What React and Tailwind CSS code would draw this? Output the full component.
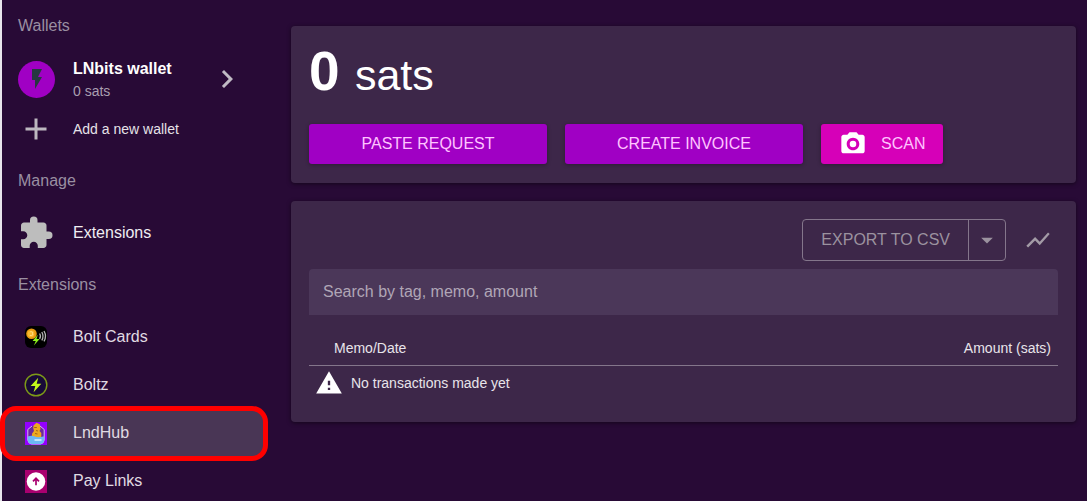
import {
  MdAdd,
  MdArrowDropDown,
  MdChevronRight,
  MdExtension,
  MdFlashOn,
  MdShowChart,
  MdWarning,
} from "react-icons/md";

function CameraIcon() {
  return (
    <svg viewBox="0 0 24 24" className="size-7 text-white" fill="currentColor" aria-hidden="true">
      <circle cx="12" cy="12" r="2.8" />
      <path d="M9 2L7.17 4H4c-1.1 0-2 .9-2 2v12c0 1.1.9 2 2 2h16c1.1 0 2-.9 2-2V6c0-1.1-.9-2-2-2h-3.17L15 2H9zm3 15.4c-2.98 0-5.4-2.42-5.4-5.4s2.42-5.4 5.4-5.4 5.4 2.42 5.4 5.4-2.42 5.4-5.4 5.4z" />
    </svg>
  );
}

function BoltCardsIcon() {
  return (
    <svg viewBox="0 0 24 24" className="size-6" aria-hidden="true">
      <rect x="1" y="1" width="22" height="22" rx="6" fill="#000" />
      <circle cx="7.5" cy="8.8" r="5.3" fill="#e99a12" />
      <circle cx="7" cy="8.8" r="3.4" fill="#f7b92e" />
      <path d="M6.2 6.8h1.6q1.3.2.7 1.6q1.2 1.8-.8 2H5.9" fill="none" stroke="#ffe29a" strokeWidth=".9" />
      <path d="M13.8 9.8L8.6 16h3.2l-1.9 4.6L15.6 14h-3.1z" fill="#8df21c" />
      <path d="M15.600 8.500q1.700 2.700 0 5.400M17.800 7q2.400 4.200 0 8.400M20 6q3 5.200 0 10.400" fill="none" stroke="#b5b5b5" strokeWidth="1.3" />
    </svg>
  );
}

function BoltzIcon() {
  return (
    <svg viewBox="0 0 24 24" className="size-6" aria-hidden="true">
      <circle cx="12" cy="12" r="10.8" fill="#180a38" stroke="#7d9a18" strokeWidth="1.4" />
      <path d="M14.2 4.8L6.6 13.1h4.7L9.6 19.2L17.3 10.8h-4.6z" fill="#c4f81a" />
    </svg>
  );
}

function LndHubIcon() {
  return (
    <svg viewBox="0 0 24 24" className="size-6" aria-hidden="true">
      <rect x="1" y="1" width="22" height="23" fill="#9400ff" />
      <path d="M8 5L3.8 8.5V19q.4 3.5 3.6 4h9.2q3.2-.5 3.6-4V8.500L16 5" fill="#6b2a9c" stroke="#d9b8f5" strokeWidth="1" />
      <path d="M9.500 4.500L12.500 1.800L15.800 3.200L16.500 8L15.500 10l1.800 2V17H7.800l.3-4.500L10 10L9.200 7z" fill="#eda91f" />
      <path d="M10.200 6.500h2.600M12 9.500l2 .5M11 12.500l2.500.5" stroke="#9b5d17" strokeWidth=".9" />
      <path d="M3.800 15.500q4-1.500 7 0t9.400-.2V19q-.4 3.500-3.600 4H7.400q-3.200-.5-3.600-4z" fill="#6bb8f5" />
      <path d="M10.500 19h7" stroke="#d6efff" strokeWidth="1.6" />
    </svg>
  );
}

function PayLinksIcon() {
  return (
    <svg viewBox="0 0 24 24" className="size-6" aria-hidden="true">
      <rect x="1" y="1" width="22" height="23" fill="#a9006f" />
      <circle cx="12" cy="12.5" r="9.3" fill="#fff" />
      <path d="M12 16.2V9.8M9 12.3L12 9.3l3 3" fill="none" stroke="#a9006f" strokeWidth="1.7" />
    </svg>
  );
}

const extensions = [
  { name: "Bolt Cards", Icon: BoltCardsIcon },
  { name: "Boltz", Icon: BoltzIcon },
  { name: "LndHub", Icon: LndHubIcon, active: true },
  { name: "Pay Links", Icon: PayLinksIcon },
];

function NavLabel({ children }) {
  return <h2 className="flex h-12 items-center px-4 text-base text-[#9a8fa2]">{children}</h2>;
}

function Sidebar() {
  return (
    <nav className="w-[265px] shrink-0 border-l-2 border-[#e9e5ec] pt-0.5">
      <NavLabel>Wallets</NavLabel>
      <a href="#wallet" className="flex h-[58px] items-center px-4">
        <span className="flex w-[55px] shrink-0">
          <span className="flex size-[37px] items-center justify-center rounded-full bg-[#a000c4]">
            <MdFlashOn className="size-6 text-[#263840]" />
          </span>
        </span>
        <span className="flex-1 leading-5">
          <span className="block text-base font-bold text-white">LNbits wallet</span>
          <span className="block text-sm text-[#a99fb0]">0 sats</span>
        </span>
        <MdChevronRight className="mr-1 size-9 text-[#c0bac4]" />
      </a>
      <a href="#add" className="flex h-[42px] items-center px-4 text-sm text-[#e6e2e8]">
        <span className="flex w-[55px] shrink-0">
          <MdAdd className="size-9 text-[#bdb8c0]" />
        </span>
        Add a new wallet
      </a>
      <div className="pt-[7px]">
        <NavLabel>Manage</NavLabel>
      </div>
      <a href="#extensions" className="flex h-14 items-center px-4 text-base text-[#f0edf2]">
        <span className="w-[55px] shrink-0">
          <MdExtension className="size-9 text-[#bdbdbd]" />
        </span>
        Extensions
      </a>
      <NavLabel>Extensions</NavLabel>
      <ul className="pt-1">
        {extensions.map(({ name, Icon, active }) => (
          <li key={name} className="relative">
            <a
              href={"#" + name}
              className={
                active
                  ? "flex h-12 items-center rounded-xl bg-[#493655] px-4 text-base text-[#e0dbe3]"
                  : "flex h-12 items-center px-4 text-base text-[#e0dbe3]"
              }
            >
              <span className="w-[55px] shrink-0 pl-1.5">
                <Icon />
              </span>
              {name}
            </a>
            {active && (
              <span className="pointer-events-none absolute -top-[3px] -right-[3px] -bottom-1 -left-0.5 z-10 rounded-2xl border-5 border-[#fe0000]" />
            )}
          </li>
        ))}
      </ul>
    </nav>
  );
}

const actionButton =
  "h-10 rounded-[3px] text-base text-[#ffc4ff] shadow-[0_1px_4px_rgba(0,0,0,0.3)] flex items-center justify-center";
const card = "rounded bg-[#3d2749] px-[18px] shadow-[0_1px_4px_rgba(0,0,0,0.5)]";

export default function App() {
  return (
    <div className="flex h-screen overflow-hidden bg-[#280a36] font-['Liberation_Sans',Arial,sans-serif]">
      <Sidebar />
      <main className="flex min-w-0 flex-1 flex-col gap-[18px] pt-[26px] pr-[11px] pl-[26px]">
        <section className={card + " pt-[15px] pb-[19px]"}>
          <h1 className="text-[43px] leading-[60px] text-white">
            <strong className="text-[55px] font-bold">0 </strong>
            sats
          </h1>
          <div className="mt-[19px] flex gap-[18px]">
            <button type="button" className={actionButton + " w-[238px] bg-[#a000c4]"}>
              PASTE REQUEST
            </button>
            <button type="button" className={actionButton + " w-[238px] bg-[#a000c4]"}>
              CREATE INVOICE
            </button>
            <button type="button" className={actionButton + " gap-[14px] bg-[#d600b8] px-[18px]"}>
              <CameraIcon />
              SCAN
            </button>
          </div>
        </section>

        <section className={card + " pt-[18px] pb-[21px]"}>
          <div className="flex items-center justify-end">
            <div className="flex h-[42px] rounded border border-[#84768b] text-base text-[#9b929f]">
              <button type="button" className="px-[18px]">
                EXPORT TO CSV
              </button>
              <button
                type="button"
                aria-label="Export options"
                className="flex w-[37px] items-center justify-center border-l border-[#84768b]"
              >
                <MdArrowDropDown className="size-7" />
              </button>
            </div>
            <button type="button" aria-label="Show chart" className="ml-[18px] pr-1.5">
              <MdShowChart className="size-7 text-[#a39ba6]" />
            </button>
          </div>
          <input
            type="search"
            aria-label="Search by tag, memo, amount"
            placeholder="Search by tag, memo, amount"
            className="mt-2 h-[46px] w-full rounded-t bg-[#4b3759] px-[14px] text-base text-white outline-none placeholder:text-[#b0a6b6]"
          />
          <table className="mt-4 w-full text-sm text-[#e8e4ea]">
            <thead>
              <tr className="h-[34px] border-b border-[#84768b]">
                <th className="pl-[25px] text-left font-normal">Memo/Date</th>
                <th className="pr-[7px] text-right font-normal">Amount (sats)</th>
              </tr>
            </thead>
            <tbody>
              <tr className="h-9">
                <td colSpan={2} className="pl-1.5">
                  <span className="flex items-center gap-2">
                    <MdWarning className="size-7 text-white" />
                    No transactions made yet
                  </span>
                </td>
              </tr>
            </tbody>
          </table>
        </section>
      </main>
    </div>
  );
}
